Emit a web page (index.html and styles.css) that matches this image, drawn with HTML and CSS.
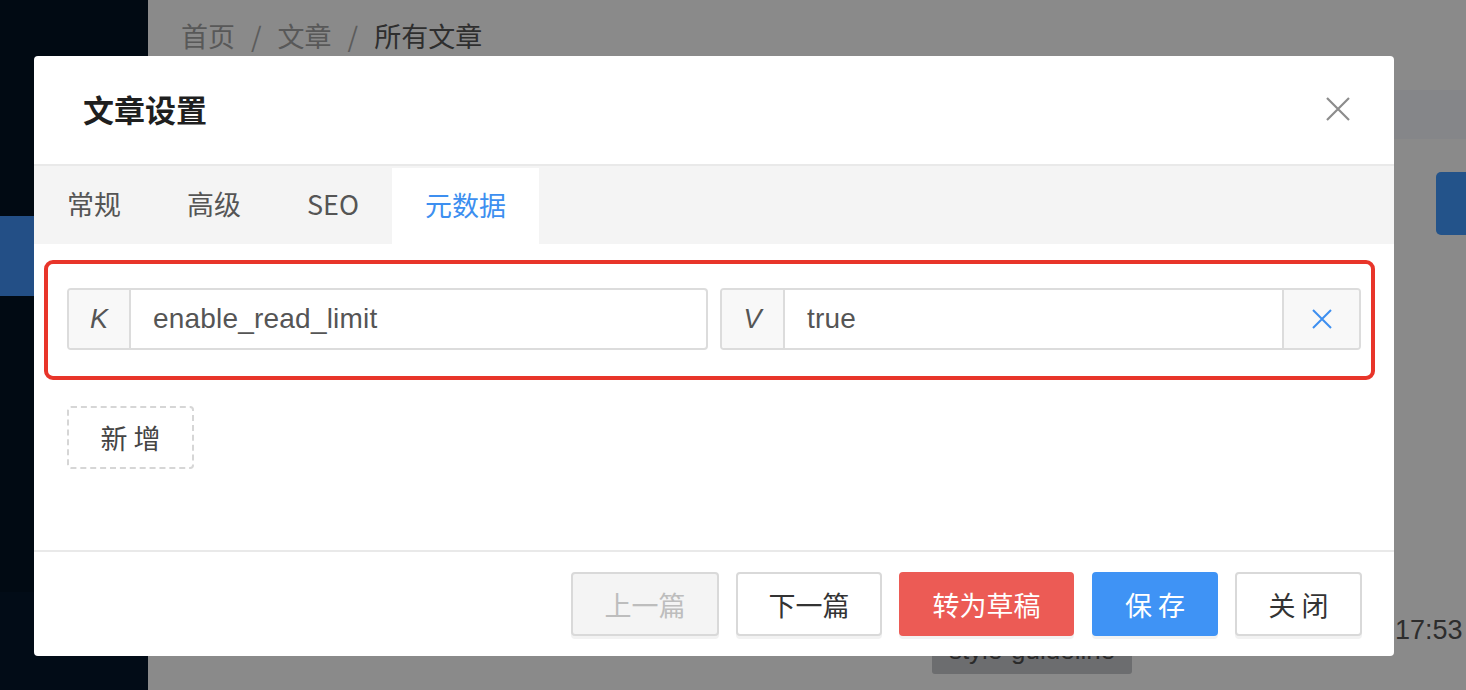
FILE: index.html
```html
<!DOCTYPE html>
<html lang="zh-CN">
<head>
<meta charset="utf-8">
<title>文章设置</title>
<link rel="stylesheet" href="styles.css">
</head>
<body>
<div class="app">
  <aside class="sidebar">
    <div class="side-top"></div>
    <div class="side-active"></div>
    <div class="side-mid"></div>
    <div class="side-bottom"></div>
  </aside>
  <main class="main">
    <header class="page-header">
      <nav class="breadcrumb">
        <span class="crumb">首页</span><span class="sep">/</span><span class="crumb">文章</span><span class="sep">/</span><span class="crumb current">所有文章</span>
      </nav>
    </header>
    <div class="band"></div>
    <div class="toolbar"><span class="page-btn"></span></div>
    <div class="list-row">
      <span class="tag">style-guideline</span>
      <span class="time">17:53</span>
    </div>
  </main>
</div>

<div class="modal">
  <div class="modal-header">
    <h2 class="modal-title">文章设置</h2>
    <span class="modal-close">
      <svg width="24" height="24" viewBox="0 0 24 24"><path d="M1 1 L23 23 M23 1 L1 23" stroke="#8c8c8c" stroke-width="2.2" fill="none"/></svg>
    </span>
  </div>
  <div class="tabs">
    <span class="tab">常规</span>
    <span class="tab">高级</span>
    <span class="tab">SEO</span>
    <span class="tab active">元数据</span>
  </div>
  <div class="modal-body">
    <div class="annotation"></div>
    <div class="meta-row">
      <div class="input-group">
        <span class="addon italic">K</span>
        <span class="input">enable_read_limit</span>
      </div>
      <div class="input-group">
        <span class="addon italic addon-v">V</span>
        <span class="input">true</span>
        <span class="addon addon-del">
          <svg width="20" height="20" viewBox="0 0 20 20"><path d="M1 1 L19 19 M19 1 L1 19" stroke="#3d8ff0" stroke-width="2" fill="none"/></svg>
        </span>
      </div>
    </div>
    <button class="add-btn">新 增</button>
  </div>
  <div class="modal-footer">
    <button class="btn disabled w-prev">上一篇</button>
    <button class="btn w-next">下一篇</button>
    <button class="btn danger w-draft">转为草稿</button>
    <button class="btn primary w-save">保 存</button>
    <button class="btn w-close">关 闭</button>
  </div>
</div>
</body>
</html>
```
FILE: styles.css
```css
* { box-sizing: border-box; }
html, body {
  margin: 0;
  width: 1466px;
  height: 690px;
  overflow: hidden;
  font-family: "Liberation Sans", "Noto Sans CJK SC", sans-serif;
}
.app {
  display: flex;
  width: 1466px;
  height: 690px;
}
.sidebar {
  width: 148px;
  flex: none;
  display: flex;
  flex-direction: column;
}
.side-top { height: 216px; background: #010a13; }
.side-active { height: 80px; background: #234f86; }
.side-mid { height: 296px; background: #010a13; }
.side-bottom { flex: 1; background: #020c17; }

.main {
  flex: 1;
  background: #8a8a8a;
  display: flex;
  flex-direction: column;
  overflow: hidden;
}
.page-header {
  height: 90px;
  padding: 16px 0 0 33px;
}
.breadcrumb {
  font-family: "Noto Sans CJK SC", sans-serif;
  font-size: 27px;
  line-height: 40px;
  color: #585858;
}
.sep { margin: 0 16px; color: #5c5c5c; }
.current { color: #2e2e2e; }
.band {
  height: 49px;
  background: #858689;
}
.toolbar {
  display: flex;
  justify-content: flex-end;
  padding-top: 33px;
  margin-right: -60px;
}
.page-btn {
  width: 90px;
  height: 63px;
  background: #23538a;
  border-radius: 5px;
}
.list-row {
  display: flex;
  align-items: flex-start;
  margin-top: 398px;
  padding-left: 784px;
}
.tag {
  width: 200px;
  height: 26px;
  margin-top: 15px;
  background: #6c6d6f;
  border-radius: 3px;
  color: #2a2a2a;
  font-size: 26px;
  line-height: 4px;
  text-align: center;
}
.time {
  margin-left: 263px;
  margin-top: -18px;
  font-size: 27px;
  line-height: 30px;
  color: #2d2d2d;
}

/* modal */
.modal {
  position: absolute;
  left: 34px;
  top: 56px;
  width: 1360px;
  height: 600px;
  background: #fff;
  border-radius: 4px;
  display: flex;
  flex-direction: column;
  overflow: hidden;
  font-family: "Noto Sans CJK SC", sans-serif;
}
.modal-header {
  height: 110px;
  flex: none;
  display: flex;
  align-items: center;
  justify-content: space-between;
  padding: 0 44px 0 49px;
  border-bottom: 2px solid #e9e9e9;
}
.modal-title {
  margin: 0;
  font-size: 31px;
  font-weight: 700;
  color: #1f1f1f;
  line-height: 40px;
  padding-bottom: 2px;
}
.modal-close {
  display: flex;
  width: 24px;
  height: 24px;
  margin-top: -2px;
}
.tabs {
  height: 78px;
  flex: none;
  display: flex;
  background: #f4f4f4;
}
.tab {
  padding: 0 33px;
  font-size: 27px;
  line-height: 76px;
  color: #555;
}
.tab.active {
  background: #fff;
  color: #3d8ff0;
  margin-top: 2px;
  line-height: 74px;
}
.modal-body {
  position: relative;
  flex: 1;
  padding: 44px 33px 0 33px;
}
.annotation {
  position: absolute;
  left: 10px;
  top: 16px;
  right: 19px;
  height: 120px;
  border: 4px solid #e8352a;
  border-radius: 9px;
}
.meta-row {
  display: flex;
  gap: 12px;
}
.input-group {
  flex: 1;
  height: 62px;
  display: flex;
  border: 2px solid #dcdcdc;
  border-radius: 4px;
  overflow: hidden;
}
.addon {
  width: 62px;
  flex: none;
  background: #f8f8f8;
  border-right: 2px solid #dcdcdc;
  display: flex;
  align-items: center;
  justify-content: center;
  font-family: "Liberation Sans", sans-serif;
  font-size: 27px;
  color: #555;
}
.addon-v { width: 63px; }
.italic { font-style: italic; }
.addon-del {
  width: 77px;
  border-right: none;
  border-left: 2px solid #dcdcdc;
}
.input {
  flex: 1;
  padding-left: 22px;
  font-family: "Liberation Sans", sans-serif;
  font-size: 28px;
  line-height: 58px;
  color: #555;
  letter-spacing: 0.2px;
}
.add-btn {
  display: block;
  margin-top: 56px;
  width: 127px;
  height: 63px;
  border: 2px dashed #d6d6d6;
  border-radius: 4px;
  background: #fff;
  font-family: "Noto Sans CJK SC", sans-serif;
  font-size: 27px;
  color: #444;
  padding: 0;
}
.modal-footer {
  flex: none;
  display: flex;
  justify-content: flex-end;
  gap: 17px;
  padding: 20px 32px 20px 0;
  border-top: 2px solid #e9e9e9;
}
.btn {
  height: 64px;
  padding: 0;
  border: 2px solid #d9d9d9;
  border-radius: 4px;
  background: #fff;
  font-family: "Noto Sans CJK SC", sans-serif;
  font-size: 27px;
  color: #333;
  box-shadow: 0 3px 0 #f2f2f2;
}
.w-prev { width: 148px; }
.w-next { width: 146px; }
.w-draft { width: 175px; }
.w-save { width: 126px; margin-left: 1px; }
.w-close { width: 127px; }
.btn.disabled {
  background: #f4f4f4;
  color: #bdbdbd;
}
.btn.danger {
  background: #ec5b55;
  border-color: #ec5b55;
  color: #fff;
}
.btn.primary {
  background: #3f93f5;
  border-color: #3f93f5;
  color: #fff;
}
```
